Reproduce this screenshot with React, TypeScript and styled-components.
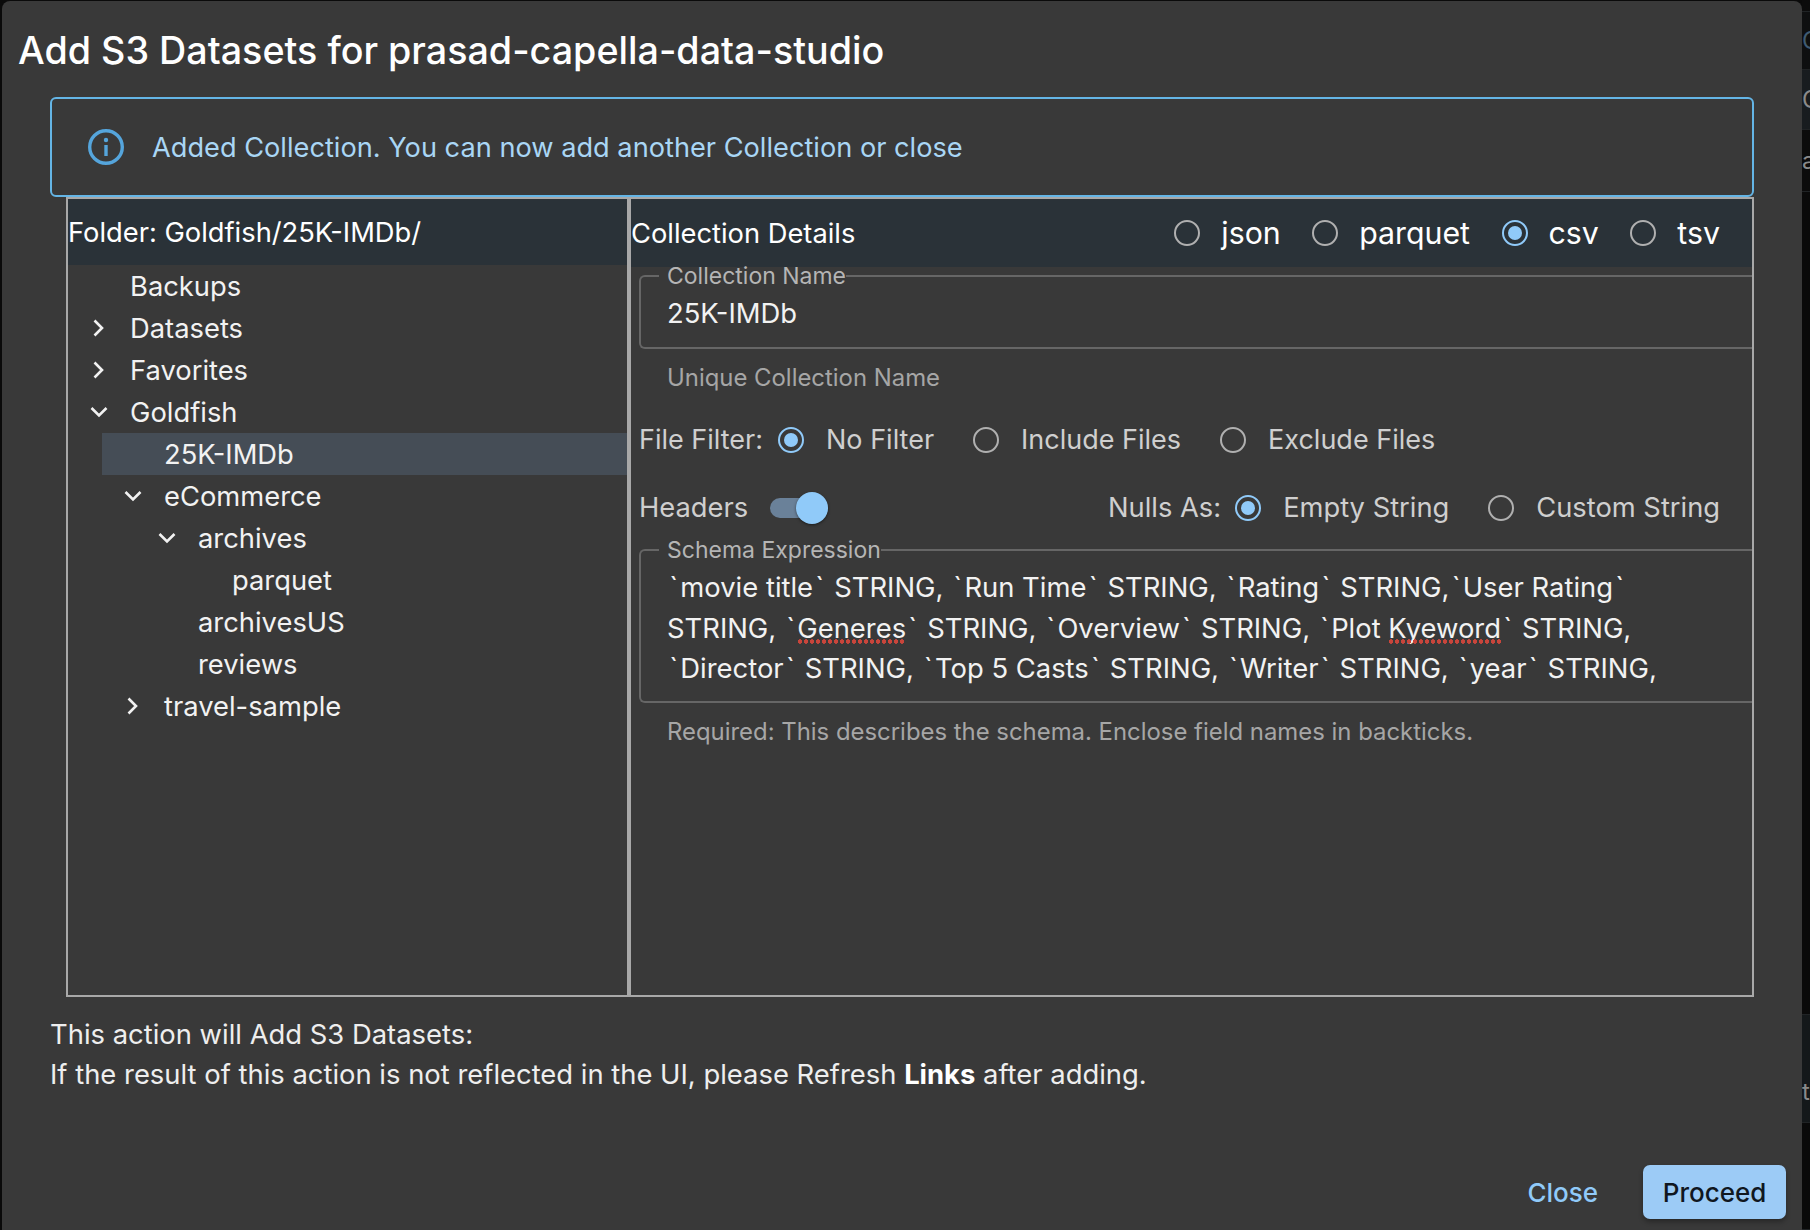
import React from 'react';
import styled, { createGlobalStyle } from 'styled-components';

const GlobalStyle = createGlobalStyle`
  html, body { margin: 0; padding: 0; background: #0a0a0a; }
  * { box-sizing: border-box; }
  body { font-family: Inter, "Liberation Sans", sans-serif; }
`;

const Page = styled.div`
  width: 1810px;
  height: 1230px;
  display: flex;
  padding: 1px 0 0 2px;
  overflow: hidden;
`;

const Modal = styled.div`
  flex: 1;
  display: flex;
  flex-direction: column;
  background: #393939;
  border-radius: 8px 8px 0 0;
`;

const EdgeStrip = styled.div`
  width: 8px;
  margin-top: -1px;
  flex: none;
  display: flex;
  flex-direction: column;
  overflow: hidden;
`;

const EdgeBand = styled.div<{ $height: number; $tone: string; $ink?: string; $drop?: number }>`
  height: ${({ $height }) => $height}px;
  flex: none;
  display: flex;
  align-items: center;
  padding-top: ${({ $drop }) => $drop ?? 0}px;
  background: ${({ $tone }) => $tone};
  border-bottom: 1px solid #202325;
  color: ${({ $ink }) => $ink ?? '#8a8a8a'};
  font-size: 24px;
  white-space: nowrap;
`;

const Title = styled.h2`
  margin: 0;
  height: 96px;
  padding: 2px 0 0 16px;
  display: flex;
  align-items: center;
  font-size: 37.7px;
  font-weight: 500;
  color: #fff;
`;

const Alert = styled.div`
  height: 100px;
  margin: 0 48px;
  display: flex;
  align-items: center;
  gap: 28px;
  padding-left: 36px;
  border: 2px solid #64b5e6;
  border-radius: 6px;
  font-size: 27.2px;
  color: #a9d6f5;
`;

const Panels = styled.div`
  height: 800px;
  margin: 0 48px 0 64px;
  display: grid;
  grid-template-columns: 563px 1fr;
  border: 2px solid #a8a8a8;
`;

const LeftPanel = styled.div`
  border-right: 4px solid #a8a8a8;
  min-width: 0;
`;

const RightPanel = styled.div`
  min-width: 0;
`;

const HeaderBar = styled.div`
  height: 66px;
  display: flex;
  align-items: center;
  justify-content: space-between;
  background: #2a3238;
  color: #fff;
  font-size: 27.3px;
`;

const RightHeader = styled(HeaderBar)`
  height: 68px;
  padding-right: 32px;
`;

const HeaderRadios = styled.div`
  display: flex;
  gap: 31.5px;
  font-size: 30.3px;
`;

const Tree = styled.ul`
  list-style: none;
  margin: 0;
  padding: 0;
`;

const TreeRow = styled.li<{ $level: number; $selected?: boolean }>`
  height: 42px;
  margin-left: ${({ $level }) => 34 * $level}px;
  display: flex;
  align-items: center;
  background: ${({ $selected }) => ($selected ? '#454d56' : 'transparent')};
  color: #f2f2f2;
  font-size: 27.35px;
`;

const Toggle = styled.span`
  width: 62px;
  padding-left: 22px;
  display: flex;
  align-items: center;
  flex: none;
`;

const RadioItem = styled.label<{ $gap: number }>`
  display: inline-flex;
  align-items: center;
  gap: ${({ $gap }) => $gap}px;
  font-size: inherit;
  color: inherit;
`;

const RadioCircle = styled.span<{ $checked?: boolean }>`
  width: 26px;
  height: 26px;
  flex: none;
  display: flex;
  align-items: center;
  justify-content: center;
  border-radius: 50%;
  border: 2.5px solid ${({ $checked }) => ($checked ? '#90caf9' : '#b0b0b0')};

  &::after {
    content: '';
    display: ${({ $checked }) => ($checked ? 'block' : 'none')};
    width: 14px;
    height: 14px;
    border-radius: 50%;
    background: #90caf9;
  }
`;

const Form = styled.div`
  padding-left: 8px;
`;

const Outlined = styled.fieldset<{ $height: number }>`
  height: ${({ $height }) => $height}px;
  margin: 0;
  padding: 8px 0 0 26px;
  border: 2px solid #666;
  border-right: none;
  border-radius: 6px 0 0 6px;
`;

const Legend = styled.legend`
  margin-left: -8px;
  padding: 0 0 0 8px;
  font-size: 23px;
  line-height: 18px;
  color: #b5b5b5;
`;

const FieldValue = styled.div`
  color: #f2f2f2;
  font-size: 27.4px;
  line-height: 40.5px;
  white-space: nowrap;
`;

const Tick = styled.span`
  padding: 0 2.25px;
`;

const Misspelled = styled.span`
  position: relative;

  &::after {
    content: '';
    position: absolute;
    left: 0;
    right: 0;
    bottom: 1px;
    height: 5px;
    background: radial-gradient(circle at center, #c9453b 2px, transparent 2.5px) repeat-x;
    background-size: 6px 5px;
  }
`;

const Helper = styled.div<{ $height: number }>`
  height: ${({ $height }) => $height}px;
  padding: 15px 0 0 28px;
  font-size: 23.9px;
  line-height: 28px;
  color: #a6a6a6;
`;

const Row = styled.div<{ $size: number }>`
  height: 68px;
  padding-top: 1px;
  display: flex;
  align-items: center;
  font-size: ${({ $size }) => $size}px;
  color: #cfcfcf;
`;

const RowLabel = styled.span<{ $gap: number }>`
  margin-right: ${({ $gap }) => $gap}px;
`;

const RadioGroup = styled.div`
  display: flex;
  gap: 39px;
`;

const NullsGroup = styled.div`
  margin-left: auto;
  margin-right: 32px;
  display: flex;
  align-items: center;
  font-size: 27.3px;
`;

const Switch = styled.span`
  position: relative;
  width: 58px;
  height: 20px;
  border-radius: 10px;
  background: #6a8199;

  &::after {
    content: '';
    position: absolute;
    right: 0;
    top: -6px;
    width: 32px;
    height: 32px;
    border-radius: 50%;
    background: #90caf9;
    box-shadow: 0 1px 3px rgba(0, 0, 0, 0.5);
  }
`;

const Notes = styled.div`
  padding: 17px 0 0 48px;
  font-size: 27.4px;
  line-height: 40px;
  color: #eee;

  b { font-weight: 700; color: #fff; }
`;

const Actions = styled.div`
  margin-top: auto;
  margin-bottom: 11px;
  padding-right: 16px;
  display: flex;
  justify-content: flex-end;
  align-items: center;
  gap: 45px;
`;

const CloseButton = styled.button`
  padding: 0;
  border: none;
  background: none;
  color: #90caf9;
  font: 500 26px Inter, sans-serif;
`;

const ProceedButton = styled.button`
  width: 143px;
  height: 54px;
  border: none;
  border-radius: 7px;
  background: #9ccbf6;
  color: #10171f;
  font: 500 26px Inter, sans-serif;
  box-shadow: 0 3px 5px rgba(0, 0, 0, 0.3);
`;

const Chevron = ({ open }: { open?: boolean }) => (
  <svg width="18" height="18" viewBox="0 0 18 18" fill="none" stroke="#f2f2f2" strokeWidth="2.6">
    <path d={open ? 'M1.5 5l7.5 7.5 7.5-7.5' : 'M4.5 1.5l7.5 7.5-7.5 7.5'} />
  </svg>
);

const InfoIcon = () => (
  <svg width="36" height="36" viewBox="0 0 36 36" fill="none">
    <circle cx="18" cy="18" r="16.3" stroke="#55a5dc" strokeWidth="3.4" />
    <circle cx="18" cy="11" r="2.2" fill="#55a5dc" />
    <path d="M18 16v11" stroke="#55a5dc" strokeWidth="3.4" />
  </svg>
);

const Radio = ({ label, checked, gap = 22 }: { label: string; checked?: boolean; gap?: number }) => (
  <RadioItem $gap={gap}>
    <RadioCircle $checked={checked} />
    {label}
  </RadioItem>
);

// backticks sit wider in the original field than Inter sets them
const withTicks = (text: string) =>
  text.split('`').flatMap((part, i) => (i === 0 ? [part] : [<Tick key={i}>`</Tick>, part]));

const TREE: { label: string; level: number; toggle?: 'open' | 'closed'; selected?: boolean }[] = [
  { label: 'Backups', level: 0 },
  { label: 'Datasets', level: 0, toggle: 'closed' },
  { label: 'Favorites', level: 0, toggle: 'closed' },
  { label: 'Goldfish', level: 0, toggle: 'open' },
  { label: '25K-IMDb', level: 1, selected: true },
  { label: 'eCommerce', level: 1, toggle: 'open' },
  { label: 'archives', level: 2, toggle: 'open' },
  { label: 'parquet', level: 3 },
  { label: 'archivesUS', level: 2 },
  { label: 'reviews', level: 2 },
  { label: 'travel-sample', level: 1, toggle: 'closed' },
];

export default function App() {
  return (
    <>
      <GlobalStyle />
      <Page>
        <Modal>
          <Title>Add S3 Datasets for prasad-capella-data-studio</Title>
          <Alert>
            <InfoIcon />
            Added Collection. You can now add another Collection or close
          </Alert>
          <Panels>
            <LeftPanel>
              <HeaderBar>Folder: Goldfish/25K-IMDb/</HeaderBar>
              <Tree>
                {TREE.map(item => (
                  <TreeRow key={item.label} $level={item.level} $selected={item.selected}>
                    <Toggle>{item.toggle && <Chevron open={item.toggle === 'open'} />}</Toggle>
                    {item.label}
                  </TreeRow>
                ))}
              </Tree>
            </LeftPanel>
            <RightPanel>
              <RightHeader>
                Collection Details
                <HeaderRadios>
                  <Radio gap={21} label="json" />
                  <Radio gap={21} label="parquet" />
                  <Radio gap={21} label="csv" checked />
                  <Radio gap={21} label="tsv" />
                </HeaderRadios>
              </RightHeader>
              <Form>
                <Outlined $height={82}>
                  <Legend>Collection Name</Legend>
                  <FieldValue>25K-IMDb</FieldValue>
                </Outlined>
                <Helper $height={56}>Unique Collection Name</Helper>
                <Row $size={27}>
                  <RowLabel $gap={15}>File Filter:</RowLabel>
                  <RadioGroup>
                    <Radio label="No Filter" checked />
                    <Radio label="Include Files" />
                    <Radio label="Exclude Files" />
                  </RadioGroup>
                </Row>
                <Row $size={27.3}>
                  <RowLabel $gap={22}>Headers</RowLabel>
                  <Switch />
                  <NullsGroup>
                    <RowLabel $gap={14}>Nulls As:</RowLabel>
                    <RadioGroup>
                      <Radio label="Empty String" checked />
                      <Radio label="Custom String" />
                    </RadioGroup>
                  </NullsGroup>
                </Row>
                <Outlined $height={162}>
                  <Legend>Schema Expression</Legend>
                  <FieldValue>{withTicks('`movie title` STRING, `Run Time` STRING, `Rating` STRING,`User Rating`')}</FieldValue>
                  <FieldValue>
                    STRING, <Tick>`</Tick><Misspelled>Generes</Misspelled><Tick>`</Tick> STRING, <Tick>`</Tick>Overview<Tick>`</Tick> STRING, <Tick>`</Tick>Plot <Misspelled>Kyeword</Misspelled><Tick>`</Tick> STRING,
                  </FieldValue>
                  <FieldValue>{withTicks('`Director` STRING, `Top 5 Casts` STRING, `Writer` STRING, `year` STRING,')}</FieldValue>
                </Outlined>
                <Helper $height={50}>Required: This describes the schema. Enclose field names in backticks.</Helper>
              </Form>
            </RightPanel>
          </Panels>
          <Notes>
            <div>This action will Add S3 Datasets:</div>
            <div>
              If the result of this action is not reflected in the UI, please Refresh <b>Links</b> after adding.
            </div>
          </Notes>
          <Actions>
            <CloseButton>Close</CloseButton>
            <ProceedButton>Proceed</ProceedButton>
          </Actions>
        </Modal>
        <EdgeStrip>
          <EdgeBand $height={12} $tone="#0c0c0c" />
          <EdgeBand $height={58} $tone="#0e0f10" $ink="#3f5a72">C</EdgeBand>
          <EdgeBand $height={60} $tone="#181c1f">C</EdgeBand>
          <EdgeBand $height={62} $tone="#0b0b0b">a</EdgeBand>
          <EdgeBand $height={823} $tone="#0a0a0a" />
          <EdgeBand $height={108} $tone="#14181a" $drop={46}>ti</EdgeBand>
          <EdgeBand $height={107} $tone="#0a0a0a" />
        </EdgeStrip>
      </Page>
    </>
  );
}
